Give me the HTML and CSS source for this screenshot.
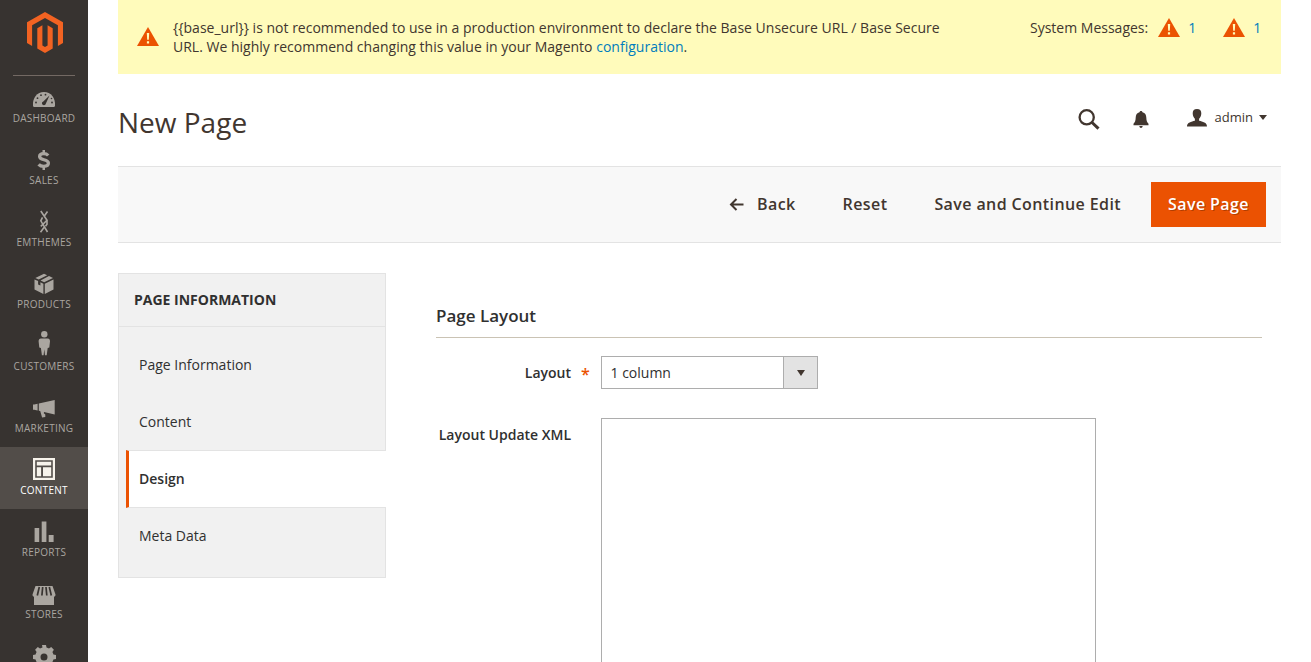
FILE: index.html
```html
<!DOCTYPE html>
<html lang="en">
<head>
<meta charset="utf-8">
<title>New Page</title>
<link rel="stylesheet" href="styles.css">
</head>
<body>
<div class="page">
  <aside class="menu">
    <a class="logo"><svg width="36" height="41" viewBox="0 0 36 41"><path fill="#f26322" d="M18 0 36 10.300V30.900L30.900 33.900V13.300L18 5.900 5.100 13.300V33.900L0 30.900V10.300Z"/><path fill="#f26322" d="M15.400 13.300V33.500L18 35.100 20.600 33.500V13.300L25.700 16.200V36.600L18 41 10.300 36.600V16.200Z"/></svg></a>
    <nav class="nav">
      <a class="item"><svg class="ico" viewBox="0 0 30 30"><path d="M4 24.500C3.400 17 8 11 15 11s11.600 6 11 13.500l-.6 1.500H4.600Z"/><g fill="#373330"><circle cx="7" cy="21.500" r=".9"/><circle cx="8.500" cy="17.200" r=".9"/><circle cx="12" cy="14.200" r=".9"/><circle cx="16.500" cy="13.700" r=".9"/><circle cx="23" cy="21.500" r=".9"/><circle cx="22.500" cy="17.500" r=".8"/><path d="m20.500 14.500-3.600 8.100a2 2 0 1 1-2.600-2.200Z"/></g></svg><span>Dashboard</span></a>
      <a class="item"><svg class="ico" viewBox="0 0 30 30"><path fill="none" stroke="#aaa6a0" stroke-width="3.300" d="M19.200 12.500C18 11.200 16.500 10.700 14.800 10.700c-2.600 0-4.200 1-4.200 2.900 0 4.300 8.800 2 8.800 6.500 0 2.200-1.900 3.200-4.700 3.200-2 0-3.900-.7-5.100-2"/><path d="M13.500 7H16v3h-2.500zM13.500 24H16v3h-2.500z"/></svg><span>Sales</span></a>
      <a class="item"><svg class="ico" viewBox="0 0 30 30"><path fill="none" stroke="#aaa6a0" stroke-width="1.600" d="m11.800 6 6.200 9.200-6.200 6.200M18.500 6.500l-3 4.300M13.500 12.300l-1.700 3.500L18.500 27M15 22.500l-3.500 4.700M18 15.200v4l-1.500 2"/></svg><span>Emthemes</span></a>
      <a class="item"><svg class="ico" viewBox="0 0 30 30"><path d="m15 6.800 3.200 1.400-8.500 4.300-3.400-1.600ZM20 9l4 1.900-8.800 4.300-3.700-1.800ZM5.500 12.400l3.600 1.700v3.400l2.300 1.100v-3.300l3 1.400V27l-8.900-4.500ZM24.500 12.400v10.100L15.800 27V16.700Z"/></svg><span>Products</span></a>
      <a class="item"><svg class="ico" viewBox="0 0 30 30"><circle cx="15.300" cy="5.300" r="3.200"/><path d="M12 9.500h6.700c1.600 0 2.300 1.200 2.300 2.700l-.7 6.200-1.600.6-1 7.200h-1.700l-.7-6-.7 6h-1.700l-1-7.200-1.600-.6-.7-6.200c0-1.500.8-2.700 2.400-2.700Z"/></svg><span>Customers</span></a>
      <a class="item"><svg class="ico" viewBox="0 0 30 30"><path d="M25.700 9 9.800 12.500v7.300l1.400.2 1.900 6.500 3.200-.4v-2.600l-1.500-1.200.2-1.400L25.700 23.500ZM4 13.500h1.200l3.400-.8v6.800l-3.400-.7H4Z"/></svg><span>Marketing</span></a>
      <a class="item active"><svg class="ico" viewBox="0 0 30 30"><path fill-rule="evenodd" d="M4 5h22v22H4ZM6.200 7.200v17.600h17.600V7.200ZM7.800 8.800h14.400v3.700H7.800ZM7.800 14.300h4.300v8.900H7.800ZM14 14.300h8.200v8.900H14Z"/></svg><span>Content</span></a>
      <a class="item"><svg class="ico" viewBox="0 0 30 30"><path d="M5.600 13h4.600v14H5.600ZM12.700 6.500h4.700V27h-4.700ZM19.700 20h4.900v7h-4.900Z"/></svg><span>Reports</span></a>
      <a class="item"><svg class="ico" viewBox="0 0 30 30"><path d="M6.500 9h17l3 8.500c0 1.400-.6 2-1.500 2.300V28H5v-8.200c-.9-.3-1.500-.9-1.500-2.300Z"/><path fill="none" stroke="#373330" stroke-width="1.700" d="m10.300 10-2 8.500M13.700 10l-.8 8.500M17 10l.8 8.500M20.300 10l2 8.500"/></svg><span>Stores</span></a>
      <a class="item"><svg class="ico" viewBox="0 0 30 30"><path fill-rule="evenodd" d="m13 6 .5 2.600a8 8 0 0 0-2.500 1L8.800 8.100 6.100 10.800 7.600 13a8 8 0 0 0-1 2.500L4 16v3.900l2.600.5a8 8 0 0 0 1 2.500l-1.500 2.200 2.700 2.700 2.200-1.500a8 8 0 0 0 2.500 1L14 30h3l.5-2.700a8 8 0 0 0 2.500-1l2.200 1.500 2.700-2.700-1.500-2.200a8 8 0 0 0 1-2.500l2.600-.5V16l-2.600-.5a8 8 0 0 0-1-2.500l1.500-2.200-2.700-2.700L20 9.600a8 8 0 0 0-2.500-1L17 6ZM15 14.500a3.500 3.500 0 1 1 0 7 3.500 3.500 0 0 1 0-7Z"/></svg></a>
    </nav>
  </aside>
  <main class="main">
    <section class="messages">
      <svg class="warn" viewBox="0 0 22 19"><path fill="#eb5202" d="M11 0 22 19H0Z"/><path fill="#fffbbb" d="M9.800 6h2.400l-.4 6.800h-1.600ZM9.900 14.200h2.200v2.300H9.900Z"/></svg>
      <p class="message">{{base_url}} is not recommended to use in a production environment to declare the Base Unsecure URL / Base Secure<br>URL. We highly recommend changing this value in your Magento <a>configuration</a>.</p>
      <div class="system"><span>System Messages:</span>
        <svg class="warn" viewBox="0 0 22 19"><path fill="#eb5202" d="M11 0 22 19H0Z"/><path fill="#fffbbb" d="M9.800 6h2.400l-.4 6.800h-1.600ZM9.900 14.200h2.200v2.300H9.900Z"/></svg><a class="count">1</a>
        <svg class="warn" viewBox="0 0 22 19"><path fill="#eb5202" d="M11 0 22 19H0Z"/><path fill="#fffbbb" d="M9.800 6h2.400l-.4 6.800h-1.600ZM9.900 14.200h2.200v2.300H9.900Z"/></svg><a>1</a>
      </div>
    </section>
    <header class="header">
      <h1>New Page</h1>
      <div class="tools">
        <svg class="search" width="22" height="21" viewBox="0 0 22 21"><circle cx="8.700" cy="8.300" r="7.100" fill="none" stroke="#41362f" stroke-width="2.300"/><path stroke="#41362f" stroke-width="3" d="m13.500 13 7 6.700"/></svg>
        <svg class="bell" width="16" height="17" viewBox="0 0 16 17"><path fill="#41362f" d="M6.500 1.200C6.700.3 7.200 0 8 0s1.300.3 1.500 1.200c2.600.6 3.700 2.600 3.800 5.300.1 3 .6 4.700 2.200 6.300v1.400H.5v-1.400c1.600-1.600 2.100-3.300 2.200-6.300.1-2.700 1.200-4.700 3.800-5.300ZM6.300 15h3.400c-.2 1.300-.8 1.900-1.700 1.900S6.500 16.300 6.300 15Z"/></svg>
        <svg class="user" width="20" height="18" viewBox="0 0 20 18"><path fill="#41362f" d="M10 0c2.900 0 4.300 1.500 4.300 4.200 0 2.500-1 4.300-2.200 5.500v2c3.500 1 7.900 1.500 7.900 5.800H0c0-4.300 4.400-4.800 7.900-5.800v-2C6.700 8.500 5.700 6.700 5.700 4.200 5.700 1.500 7.100 0 10 0Z"/></svg>
        <span class="admin">admin</span>
        <svg width="8" height="5" viewBox="0 0 8 5"><path fill="#41362f" d="M0 0h8L4 5Z"/></svg>
      </div>
    </header>
    <section class="actions">
      <a class="back"><svg width="15" height="13" viewBox="0 0 15 13"><path fill="none" stroke="#41362f" stroke-width="2" d="M14.500 6.500H2M7.500 1 2 6.500 7.500 12"/></svg>Back</a>
      <a class="reset">Reset</a>
      <a class="continue">Save and Continue Edit</a>
      <button class="save">Save Page</button>
    </section>
    <div class="columns">
      <aside class="tabs">
        <h2>Page Information</h2>
        <ul><li>Page Information</li><li>Content</li><li class="current">Design</li><li>Meta Data</li></ul>
      </aside>
      <section class="form">
        <h3>Page Layout</h3>
        <div class="field"><label class="required">Layout</label>
          <div class="select"><span>1 column</span><i><svg width="8" height="6" viewBox="0 0 8 6"><path fill="#41362f" d="M0 0h8L4 6Z"/></svg></i></div></div>
        <div class="field xml"><label>Layout Update XML</label><div class="textarea"></div></div>
      </section>
    </div>
  </main>
</div>
</body>
</html>
```
FILE: styles.css
```css
* { box-sizing: border-box; }
body { margin: 0; height: 662px; overflow: hidden; background: #fff; color: #303030; font: 14px/19px "Open Sans", sans-serif; }
h1, h2, h3, p, ul { margin: 0; padding: 0; }
a { text-decoration: none; }
.page { display: flex; height: 662px; overflow: hidden; }
.menu { flex: 0 0 88px; background: #373330; overflow: hidden; }
.logo { display: flex; justify-content: center; height: 75px; padding: 12px 0 0 1px; }
.nav { border-top: 1px solid transparent; background: linear-gradient(#736963, #736963) 13px 0 / 62px 1px no-repeat border-box; }
.item { display: flex; flex-direction: column; align-items: center; height: 62px; padding-top: 6px; color: #aaa6a0; font-size: 10px; line-height: 14px; letter-spacing: .25px; text-transform: uppercase; }
.item:first-child { margin-top: -1px; }
.item.active { background: #524d49; color: #fff; }
.ico { width: 30px; height: 30px; flex: none; fill: #aaa6a0; }
.active .ico { fill: #f7f3eb; }
.main { flex: none; width: 1163px; margin-left: 30px; }
.messages { display: flex; height: 74px; background: #fffbbb; padding-top: 18px; color: #41362f; }
.warn { width: 22px; height: 19px; flex: none; }
.messages > .warn { margin: 9px 14px 0 19px; }
.message { width: 790px; white-space: nowrap; letter-spacing: .008px; }
.messages a { color: #007dbd; }
.system { display: flex; margin-left: 67px; white-space: nowrap; }
.system .warn { margin: 0 8px 0 10px; }
.system .count { width: 25px; }
.header { display: flex; justify-content: space-between; height: 92px; padding: 29px 14px 0 0; }
h1 { font-size: 28px; line-height: 38px; font-weight: 400; color: #41362f; }
.tools { display: flex; align-items: center; height: 28px; color: #41362f; font-size: 13px; }
.search { margin: 4px 33px 0 0; }
.bell { margin: 5px 38px 0 0; }
.user { margin: 1px 8px 0 0; }
.admin { margin-right: 6px; }
.actions { display: flex; align-items: center; justify-content: flex-end; height: 77px; padding-right: 15px; background: #f8f8f8; border: 1px solid #e3e3e3; border-width: 1px 0; color: #41362f; font-size: 16px; font-weight: 600; letter-spacing: .4px; }
.actions a { white-space: nowrap; }
.back { display: flex; align-items: center; gap: 13px; margin-right: 47px; }
.reset { margin-right: 47px; }
.continue { margin-right: 30px; }
.save { width: 115px; height: 45px; padding: 0 0 2px; border: 0; background: #eb5202; color: #fff; font: 600 16px/22px "Open Sans", sans-serif; letter-spacing: .4px; text-shadow: 1px 1px 0 rgba(0,0,0,.25); }
.columns { display: flex; margin-top: 30px; }
.tabs { width: 268px; height: 305px; flex: none; background: #f1f1f1; border: 1px solid #e3e3e3; }
h2 { height: 53px; padding: 16px 15px; border-bottom: 1px solid #e3e3e3; font-size: 14px; line-height: 19px; font-weight: 700; text-transform: uppercase; }
.tabs ul { list-style: none; padding-top: 9px; }
.tabs li { height: 57px; padding: 19px 20px; }
.tabs .current { height: 58px; margin: 0 -1px -1px 7px; padding: 18px 10px; border: 1px solid #e3e3e3; border-width: 1px 0; border-left: 3px solid #eb5202; background: #fff; font-weight: 600; }
.form { width: 826px; margin-left: 50px; padding-top: 32px; }
h3 { height: 33px; border-bottom: 1px solid #cac3b4; font-size: 17px; line-height: 22px; font-weight: 600; }
.field { display: flex; margin-top: 18px; }
.field label { width: 135px; margin-right: 30px; padding-top: 7px; text-align: right; font-weight: 600; white-space: nowrap; }
.required::after { content: "*"; position: absolute; margin: 2px 0 0 10px; color: #eb5202; font-size: 16px; }
.select { display: flex; width: 217px; height: 33px; border: 1px solid #adadad; }
.select span { flex: 1; padding: 6px 8.500px; }
.select i { display: flex; align-items: center; justify-content: center; width: 34px; background: #e3e3e3; border-left: 1px solid #adadad; }
.xml { margin-top: 29px; }
.textarea { width: 495px; height: 300px; border: 1px solid #adadad; }
```
